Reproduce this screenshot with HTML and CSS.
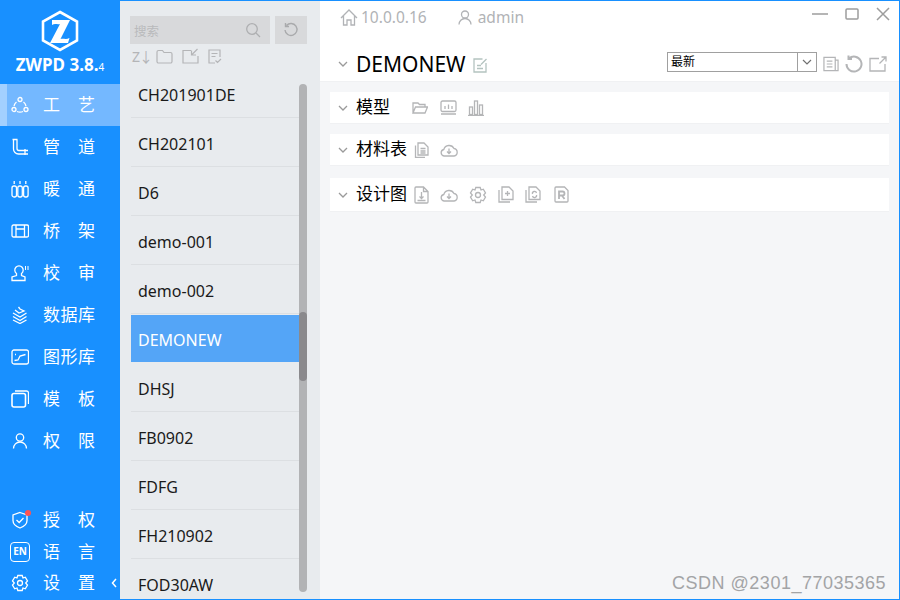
FILE: index.html
```html
<!DOCTYPE html>
<html lang="en">
<head>
  <meta charset="UTF-8" />
  <title>ZWPD 3.8.4</title>
  <link rel="stylesheet" href="styles.css">
</head>
<body>
<div class="app">

  <!-- left navigation -->
  <aside class="side">
    <div class="brand">
      <svg class="logo" width="38" height="42" viewBox="0 0 38 42">
        <path d="M19 2 L36 11.500 V30.500 L19 40 L2 30.500 V11.500 Z" fill="none" stroke="#fff" stroke-width="2.600"/>
        <path d="M11 10 H29 L19.500 29 C22 28 25 30 28.500 28 L27 33 H9 L19 14 C16.500 15 14 13 11 15 Z" fill="#fff"/>
      </svg>
      <div class="brand-name">ZWPD 3.8.<small>4</small></div>
    </div>

    <nav class="nav">
      <a class="nav-item active">
        <svg class="nav-icon" viewBox="0 0 18 18"><circle cx="9" cy="3.500" r="2"/><circle cx="3" cy="13.500" r="2"/><circle cx="15" cy="13.500" r="2"/><path d="M5.500 6A7 7 0 0 0 3 10M12.500 6A7 7 0 0 1 15 10M6 15.500A7 7 0 0 0 12 15.500"/></svg>
        <span class="nav-label"><i>工</i><i>艺</i></span>
      </a>
      <a class="nav-item">
        <svg class="nav-icon" viewBox="0 0 18 18"><path d="M1.500 1.500H6.500M2.500 1.500V11A5 5 0 0 0 7.500 16H17M6 1.500V10.500A2 2 0 0 0 8 12.500H17M14 11V17"/></svg>
        <span class="nav-label"><i>管</i><i>道</i></span>
      </a>
      <a class="nav-item">
        <svg class="nav-icon" viewBox="0 0 18 18"><rect x="1" y="6" width="4.500" height="11" rx="2"/><rect x="6.800" y="6" width="4.500" height="11" rx="2"/><rect x="12.600" y="6" width="4.500" height="11" rx="2"/><path d="M3.200 1V4M9 1V4M14.800 1V4"/></svg>
        <span class="nav-label"><i>暖</i><i>通</i></span>
      </a>
      <a class="nav-item">
        <svg class="nav-icon" viewBox="0 0 18 18"><rect x="1" y="3" width="16.500" height="12" rx="1.500"/><path d="M5 3V15M13.500 3V15M5 7H13.500"/></svg>
        <span class="nav-label"><i>桥</i><i>架</i></span>
      </a>
      <a class="nav-item">
        <svg class="nav-icon" viewBox="0 0 18 18"><path d="M5.500 9.500A4.200 4.200 0 1 1 10.500 9.500V11.500L14 13V16.500H1V13L5.500 11.500Z"/><path class="thin" d="M14.500 2V6M17 2V6"/></svg>
        <span class="nav-label"><i>校</i><i>审</i></span>
      </a>
      <a class="nav-item">
        <svg class="nav-icon" viewBox="0 0 18 18"><path d="M2 7L9 11L15.500 7M2 10.500L9 14.500L15.500 10.500M2 14L9 17.500L15.500 14"/><path d="M4 4L8 7L13 5L9 3L7.500 1"/></svg>
        <span class="nav-label"><i>数</i><i>据</i><i>库</i></span>
      </a>
      <a class="nav-item">
        <svg class="nav-icon" viewBox="0 0 18 18"><rect x="1" y="2" width="16.500" height="14" rx="2"/><path d="M3.500 12.500L7 12L9 8L14.500 6.500"/><path d="M4 6.500H5"/></svg>
        <span class="nav-label"><i>图</i><i>形</i><i>库</i></span>
      </a>
      <a class="nav-item">
        <svg class="nav-icon" viewBox="0 0 18 18"><rect x="1" y="3.500" width="13.500" height="13.500" rx="2" stroke-width="1.600"/><path d="M4 1H15.500A2 2 0 0 1 17.500 3V14"/></svg>
        <span class="nav-label"><i>模</i><i>板</i></span>
      </a>
      <a class="nav-item">
        <svg class="nav-icon" viewBox="0 0 18 18"><circle cx="9" cy="5.500" r="3.700"/><path d="M2.500 16.500A6.500 6.500 0 0 1 15.500 16.500"/></svg>
        <span class="nav-label"><i>权</i><i>限</i></span>
      </a>
    </nav>

    <div class="side-bottom">
      <a class="nav-item small">
        <span class="badge-wrap">
          <svg class="nav-icon" viewBox="0 0 18 18"><path d="M9 1.500L16 4V9.500C16 13 13 15.500 9 17C5 15.500 2 13 2 9.500V4Z"/><path d="M5.500 9L8.200 11.500L12.500 7"/></svg>
          <b class="red-dot"></b>
        </span>
        <span class="nav-label"><i>授</i><i>权</i></span>
      </a>
      <a class="nav-item small">
        <span class="lang-box">EN</span>
        <span class="nav-label"><i>语</i><i>言</i></span>
      </a>
      <a class="nav-item small">
        <svg class="nav-icon" viewBox="0 0 18 18"><path d="M6.800 1.500H11.200L12 4L14.300 3.200L16.500 7L14.700 9L16.500 11L14.300 14.800L12 14L11.200 16.500H6.800L6 14L3.700 14.800L1.500 11L3.300 9L1.500 7L3.700 3.200L6 4Z"/><circle cx="9" cy="9" r="2.500"/></svg>
        <span class="nav-label"><i>设</i><i>置</i></span>
        <svg class="collapse" width="6" height="10" viewBox="0 0 6 10"><path d="M5 1L1.500 5L5 9" fill="none" stroke="#fff" stroke-width="1.500"/></svg>
      </a>
    </div>
  </aside>

  <!-- project list -->
  <section class="projects">
    <div class="search-row">
      <div class="search">
        <span>搜索</span>
        <svg width="16" height="16" viewBox="0 0 16 16"><circle cx="7" cy="7" r="5.300"/><path d="M11 11L15 15"/></svg>
      </div>
      <button class="reset">
        <svg width="16" height="16" viewBox="0 0 16 16"><path d="M3.500 3.500A6 6 0 1 1 2 8M2.500 1V4.500H6"/></svg>
      </button>
    </div>
    <div class="list-tools">
      <span class="sort">Z↓</span>
      <svg width="17" height="15" viewBox="0 0 17 15"><path d="M1 3A1.500 1.500 0 0 1 2.500 1.500H6.500L8 3.500H14.500A1.500 1.500 0 0 1 16 5V12.500A1.500 1.500 0 0 1 14.500 14H2.500A1.500 1.500 0 0 1 1 12.500Z"/></svg>
      <svg width="17" height="16" viewBox="0 0 17 16"><path d="M9 2.500H1V15H16V8M15.500 1L10 6.500M9.500 2.500V7H14"/></svg>
      <svg width="14" height="15" viewBox="0 0 14 15"><path d="M7 14H1V1H12V8M3.500 4.500H9.500M3.500 7.500H7.500M7.500 11.500L9.500 13.500L13 10"/></svg>
    </div>
    <ul class="project-list">
      <li>CH201901DE</li>
      <li>CH202101</li>
      <li>D6</li>
      <li>demo-001</li>
      <li>demo-002</li>
      <li class="current">DEMONEW</li>
      <li>DHSJ</li>
      <li>FB0902</li>
      <li>FDFG</li>
      <li>FH210902</li>
      <li>FOD30AW</li>
    </ul>
    <div class="scroll-track"><div class="scroll-thumb"></div></div>
  </section>

  <!-- project detail -->
  <main class="main">
    <header class="head">
      <div class="status-row">
        <span class="status">
          <svg width="18" height="17" viewBox="0 0 18 17"><path d="M1 9L9 1L17 9M3.500 7V16H7V11H11V16H14.500V7"/></svg>
          10.0.0.16
        </span>
        <span class="status user">
          <svg width="14" height="15" viewBox="0 0 14 15"><circle cx="7" cy="4.500" r="3.500"/><path d="M1 14.500A6 6 0 0 1 13 14.500"/></svg>
          admin
        </span>
        <div class="win-btns">
          <svg width="16" height="14" viewBox="0 0 16 14"><path d="M0 7H16"/></svg>
          <svg width="14" height="14" viewBox="0 0 14 14"><rect x="1" y="2" width="12" height="10" rx="1"/></svg>
          <svg width="14" height="14" viewBox="0 0 14 14"><path d="M1 1L13 13M13 1L1 13"/></svg>
        </div>
      </div>
      <div class="title-row">
        <svg class="chev" width="10" height="6" viewBox="0 0 10 6"><path d="M1 1L5 5L9 1"/></svg>
        <h1>DEMONEW</h1>
        <svg class="ico edit" width="14" height="15" viewBox="0 0 14 15"><path d="M9.500 1H1V14H13V5M13.500 1L8 6.500M4 7.500H8M4 10.500H10"/></svg>
        <div class="title-tools">
          <div class="version">
            <span>最新</span>
            <b><svg width="10" height="6" viewBox="0 0 10 6"><path d="M1 1L5 5L9 1"/></svg></b>
          </div>
          <svg class="ico" width="16" height="16" viewBox="0 0 17 16"><path d="M1 1H13V15H1ZM13 4H16V15H13M4 5H10M4 8H10M4 11H10"/></svg>
          <svg class="ico thick" width="18" height="18" viewBox="0 0 18 18"><path d="M4 3.500A7.500 7.500 0 1 1 1.500 9M3.500 0.500V4H7"/></svg>
          <svg class="ico" width="18" height="16" viewBox="0 0 18 16"><path d="M10 2.500H1V15H16V8M17 1L10.500 7.500M12.500 1H17V5.500"/></svg>
        </div>
      </div>
    </header>

    <div class="panel">
      <svg class="chev" width="10" height="6" viewBox="0 0 10 6"><path d="M1 1L5 5L9 1"/></svg>
      <span class="panel-name">模型</span>
      <div class="panel-tools model-tools">
        <svg class="ico" width="16" height="13" viewBox="0 0 16 13"><path d="M1 12V2H6L7.500 3.500H13V6M1 12L3.500 6H15.500L13 12Z"/></svg>
        <svg class="ico" width="17" height="15" viewBox="0 0 17 15"><rect x="1" y="1" width="15" height="10.500" rx="1.500"/><path d="M1 14H16M5 9V6M8.500 9V4.500M12 9V6"/></svg>
        <svg class="ico bars" width="16" height="16" viewBox="0 0 16 16"><rect x="1.500" y="7" width="3" height="7.500"/><rect x="6.500" y="1" width="3" height="13.500"/><rect x="11.500" y="5" width="3" height="9.500"/><path d="M0 15.500H16"/></svg>
      </div>
    </div>

    <div class="panel">
      <svg class="chev" width="10" height="6" viewBox="0 0 10 6"><path d="M1 1L5 5L9 1"/></svg>
      <span class="panel-name">材料表</span>
      <div class="panel-tools">
        <svg class="ico" width="15" height="16" viewBox="0 0 15 16"><path d="M4 1H10L14 5V13H4ZM1.500 3.500V15.500H11M6.500 6.500H11.500M6.500 9H11.500M6.500 11H11.500"/></svg>
        <svg class="ico" width="18" height="14" viewBox="0 0 18 14"><path d="M5 13H4A3.300 3.300 0 0 1 3.800 6.500A5.500 5.500 0 0 1 14 5.500A3.800 3.800 0 0 1 14 13Z"/><path d="M9 5.500V10.500M7 8.500L9 10.500L11 8.500"/></svg>
      </div>
    </div>

    <div class="panel tall">
      <svg class="chev" width="10" height="6" viewBox="0 0 10 6"><path d="M1 1L5 5L9 1"/></svg>
      <span class="panel-name">设计图</span>
      <div class="panel-tools">
        <svg class="ico" width="15" height="18" viewBox="0 0 15 18"><path d="M9.500 1H2A1 1 0 0 0 1 2V16A1 1 0 0 0 2 17H13A1 1 0 0 0 14 16V5.500ZM9.500 1V5.500H14M7.500 6V12.500M5.500 10.500L7.500 12.500L9.500 10.500M3.500 14.500H11.500"/></svg>
        <svg class="ico" width="18" height="14" viewBox="0 0 18 14"><path d="M5 13H4A3.300 3.300 0 0 1 3.800 6.500A5.500 5.500 0 0 1 14 5.500A3.800 3.800 0 0 1 14 13Z"/><path d="M9 5.500V10.500M7 8.500L9 10.500L11 8.500"/></svg>
        <svg class="ico" width="18" height="18" viewBox="0 0 18 18"><path d="M6.800 1.500H11.200L12 4L14.300 3.200L16.500 7L14.700 9L16.500 11L14.300 14.800L12 14L11.200 16.500H6.800L6 14L3.700 14.800L1.500 11L3.300 9L1.500 7L3.700 3.200L6 4Z"/><circle cx="9" cy="9" r="2.500"/></svg>
        <svg class="ico" width="16" height="17" viewBox="0 0 16 17"><path d="M4 1H11L15 5V13.500H4ZM1 4V16H12M9.500 5V10M7 7.500H12"/></svg>
        <svg class="ico" width="16" height="17" viewBox="0 0 16 17"><path d="M4 1H11L15 5V13.500H4ZM1 4V16H12M7.500 8A2 2 0 0 1 11.500 7M11.500 9A2 2 0 0 1 7.500 10"/></svg>
        <svg class="ico last" width="15" height="17" viewBox="0 0 15 17"><path d="M2 1H10.500L14 4.500V15A1 1 0 0 1 13 16H2A1 1 0 0 1 1 15V2A1 1 0 0 1 2 1Z"/><path class="thick" d="M5 13V5.500H8.500A2 2 0 0 1 8.500 9.500H5M8 9.500L10.500 13"/></svg>
      </div>
    </div>

    <div class="watermark">CSDN @2301_77035365</div>
  </main>
</div>
</body>
</html>
```

FILE: styles.css
```css
* {
  box-sizing: border-box;
}
body {
  margin: 0;
  font-family: "Noto Sans", "Noto Sans CJK SC", sans-serif;
  background-color: #f5f6f8;
  overflow: hidden;
}
svg {
  display: block;
  flex: none;
}
ul {
  margin: 0;
  padding: 0;
  list-style: none;
}
.app {
  display: flex;
  height: 600px;
  width: 900px;
  border-top: 1px solid #1890ff;
  border-right: 1px solid #1890ff;
  border-bottom: 1px solid #1890ff;
}

/* navigation */
.side {
  width: 120px;
  flex: none;
  display: flex;
  flex-direction: column;
  background-color: #1890ff;
  color: #fff;
}
.brand {
  height: 83px;
  padding-top: 9px;
  display: flex;
  flex-direction: column;
  align-items: center;
}
.brand-name {
  margin-top: 1px;
  font-size: 17px;
  font-weight: 700;
  line-height: 24px;
  white-space: nowrap;
}
.brand-name small {
  font-size: 10px;
  font-weight: 400;
}
.nav {
  flex: 1;
}
.nav-item {
  display: flex;
  align-items: center;
  height: 42px;
  padding-left: 11px;
  font-size: 17px;
  position: relative;
}
.nav-item.active {
  background-color: #74b8ff;
  border-left: 7px solid #a3d0ff;
  padding-left: 4px;
}
.nav-icon {
  width: 18px;
  height: 18px;
  fill: none;
  stroke: #fff;
  stroke-width: 1.300;
}
.nav-icon .thin {
  stroke-width: 1;
}
.nav-label {
  margin-left: 14px;
  width: 52px;
  display: flex;
  justify-content: space-between;
  line-height: 22px;
}
.nav-label i {
  font-style: normal;
}
.nav-item.small {
  height: 31.500px;
}
.badge-wrap {
  position: relative;
}
.red-dot {
  position: absolute;
  top: -1px;
  right: -2px;
  width: 6px;
  height: 6px;
  border-radius: 50%;
  background-color: #ff5252;
}
.lang-box {
  width: 20px;
  height: 20px;
  margin-left: -1px;
  margin-right: -1px;
  border: 1.500px solid #fff;
  border-radius: 4px;
  font-size: 10px;
  font-weight: 700;
  line-height: 17px;
  text-align: center;
}
.collapse {
  margin-left: 16px;
}

/* project list */
.projects {
  width: 200px;
  flex: none;
  position: relative;
  background-color: #e8ebee;
  padding-left: 10px;
  overflow: hidden;
}
.search-row {
  display: flex;
  gap: 5px;
  margin-top: 15px;
}
.search {
  width: 140px;
  height: 28px;
  background-color: #d8d9db;
  display: flex;
  align-items: center;
  justify-content: space-between;
  padding: 0 9px 0 4px;
  font-size: 12.500px;
  color: #b9babc;
}
.search svg {
  fill: none;
  stroke: #aeafb1;
  stroke-width: 1.300;
}
.reset {
  width: 32px;
  height: 28px;
  padding: 0;
  border: none;
  background-color: #d8d9db;
  display: flex;
  align-items: center;
  justify-content: center;
}
.reset svg {
  fill: none;
  stroke: #a9aaac;
  stroke-width: 1.400;
}
.list-tools {
  height: 24px;
  padding-left: 2px;
  display: flex;
  align-items: center;
  gap: 9px;
}
.list-tools svg {
  fill: none;
  stroke: #b4b5b7;
  stroke-width: 1.200;
}
.sort {
  width: 16px;
  font-size: 14px;
  color: #b4b5b7;
  white-space: nowrap;
  letter-spacing: -1px;
  margin-right: -1px;
}
.project-list {
  padding-top: 2px;
}
.project-list li {
  height: 48px;
  margin-left: 1px;
  margin-bottom: 1px;
  width: 168px;
  padding: 2px 0 0 7px;
  display: flex;
  align-items: center;
  font-size: 16px;
  color: #1a1a1a;
  border-bottom: 1px solid #dcdfe2;
}
.project-list li.current {
  height: 47px;
  margin-bottom: 2px;
  background-color: #54a5f7;
  color: #fff;
  border-bottom: none;
}
.scroll-track {
  position: absolute;
  left: 179px;
  top: 83px;
  width: 8px;
  height: 508px;
  border-radius: 4px;
  background-color: #b2b3b5;
}
.scroll-thumb {
  margin-top: 228px;
  height: 69px;
  border-radius: 4px;
  background-color: #8a898c;
}

/* project detail */
.main {
  flex: 1;
  position: relative;
  padding: 0 10px;
  background-color: #f5f6f8;
}
.head {
  margin: 0 -10px 10px;
  background-color: #fff;
  height: 81px;
  padding: 0 12px 0 18px;
  border-bottom: 1px solid #f0f1f3;
}
.status-row {
  display: flex;
  align-items: center;
  height: 32px;
  padding-left: 2px;
  color: #b1b3b6;
  font-size: 15.500px;
}
.status {
  display: flex;
  align-items: center;
  gap: 3px;
}
.status svg {
  fill: none;
  stroke: #b1b3b6;
  stroke-width: 1.300;
}
.status.user {
  margin-left: 31px;
  gap: 6px;
}
.win-btns {
  margin-left: auto;
  margin-right: -3px;
  margin-bottom: 7px;
  display: flex;
  align-items: center;
  gap: 17px;
}
.win-btns svg {
  fill: none;
  stroke: #9d9d9d;
  stroke-width: 1.500;
}
.title-row {
  display: flex;
  align-items: center;
  height: 32px;
  margin-top: 15px;
}
.chev {
  fill: none;
  stroke: #9a9a9a;
  stroke-width: 1.300;
  margin-right: 8px;
}
h1 {
  margin: 0;
  font-size: 21px;
  font-weight: 400;
  color: #000;
  line-height: 32px;
}
.ico {
  fill: none;
  stroke: #b4b5b7;
  stroke-width: 1.300;
}
.ico.thick {
  stroke-width: 2;
}
.ico .thick {
  stroke-width: 1.800;
}
.edit {
  margin-left: 7px;
  margin-top: 2px;
  stroke: #b4c3c0;
}
.title-tools {
  margin-left: auto;
  display: flex;
  align-items: center;
  gap: 6px;
}
.version {
  width: 150px;
  height: 20px;
  margin-bottom: 4px;
  display: flex;
  justify-content: space-between;
  background-color: #fff;
  border: 1px solid #a0a0a0;
  font-size: 12px;
  line-height: 18px;
  color: #000;
  padding-left: 3px;
}
.version b {
  width: 19px;
  border-left: 1px solid #a0a0a0;
  display: flex;
  align-items: center;
  justify-content: center;
}
.version svg {
  fill: none;
  stroke: #707070;
  stroke-width: 1.200;
}

/* collapsible sections */
.panel {
  height: 32px;
  margin-bottom: 10px;
  background-color: #fff;
  padding-left: 8px;
  display: flex;
  align-items: center;
  border-bottom: 1px solid #f0f1f3;
}
.panel.tall {
  height: 34px;
  margin-top: 12px;
}
.panel-name {
  font-size: 17px;
  line-height: 22px;
  margin-bottom: 1px;
  color: #000;
}
.panel-tools {
  display: flex;
  align-items: center;
  gap: 11px;
  margin-left: 7px;
}
.panel-tools .last {
  margin-left: 2px;
}
.panel-tools .bars {
  margin-left: -1px;
}
.model-tools {
  gap: 12px;
  margin-left: 22px;
}
.watermark {
  position: absolute;
  right: 13px;
  bottom: 5px;
  font-family: "Liberation Sans", sans-serif;
  font-size: 18px;
  letter-spacing: 0.500px;
  color: #a3a4a6;
}
```
